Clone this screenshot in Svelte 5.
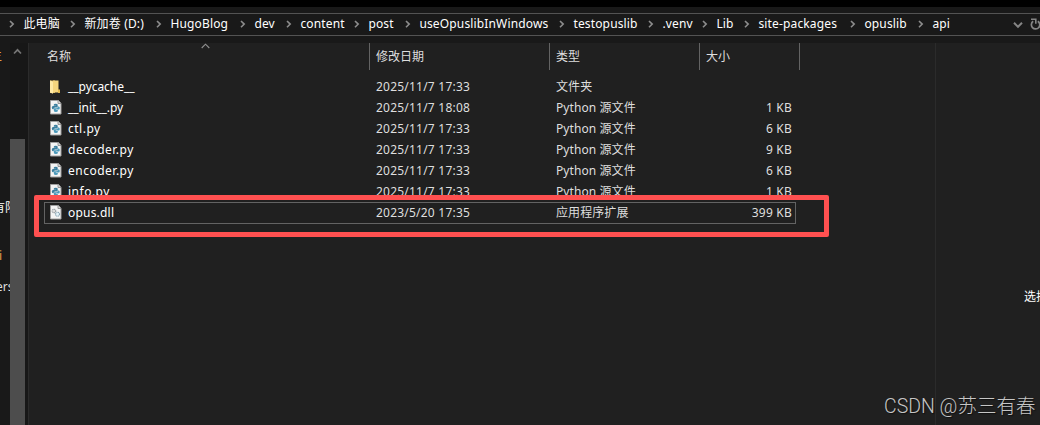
<script>
  const crumbs = [
    { name: '此电脑', width: 37 },
    { name: '新加卷 (D:)', width: 62 },
    { name: 'HugoBlog', width: 60 },
    { name: 'dev', width: 22 },
    { name: 'content', width: 44 },
    { name: 'post', width: 27 },
    { name: 'useOpuslibInWindows', width: 130 },
    { name: 'testopuslib', width: 65 },
    { name: '.venv', width: 30 },
    { name: 'Lib', width: 18 },
    { name: 'site-packages', width: 82 },
    { name: 'opuslib', width: 44 },
    { name: 'api', width: 20 }
  ];

  const files = [
    { name: '__pycache__', date: '2025/11/7 17:33', kind: 'folder', type: '文件夹', size: '' },
    { name: '__init__.py', date: '2025/11/7 18:08', kind: 'python', type: 'Python 源文件', size: '1 KB' },
    { name: 'ctl.py', date: '2025/11/7 17:33', kind: 'python', type: 'Python 源文件', size: '6 KB' },
    { name: 'decoder.py', date: '2025/11/7 17:33', kind: 'python', type: 'Python 源文件', size: '9 KB' },
    { name: 'encoder.py', date: '2025/11/7 17:33', kind: 'python', type: 'Python 源文件', size: '6 KB' },
    { name: 'info.py', date: '2025/11/7 17:33', kind: 'python', type: 'Python 源文件', size: '1 KB' },
    { name: 'opus.dll', date: '2023/5/20 17:35', kind: 'dll', type: '应用程序扩展', size: '399 KB', selected: true }
  ];
</script>

{#snippet arrow()}
  <svg class="arrow" width="25" height="12" viewBox="0 0 25 12">
    <path d="M11 3l3.2 3.1L11 9.2" fill="none" stroke="#8c8c8c" stroke-width="1.6" />
  </svg>
{/snippet}

<div class="window">
  <div class="titlebar"></div>

  <div class="address">
    <div class="crumbs">
      {@render arrow()}
      {#each crumbs as crumb, i}
        {#if i > 0}{@render arrow()}{/if}
        <span class="crumb" style:width="{crumb.width - 1}px">{crumb.name}</span>
      {/each}
    </div>
    <div class="tools">
      <svg width="10" height="8" viewBox="0 0 10 8">
        <path d="M1 1.8l4 4 4-4" fill="none" stroke="#858585" stroke-width="2" />
      </svg>
      <svg class="refresh" width="12" height="13" viewBox="0 0 12 13">
        <path d="M7.8 3.2A4.2 4.2 0 1 1 3.2 3.3" fill="none" stroke="#858585" stroke-width="1.7" />
        <path d="M1 1.2h4.8v4.5" fill="none" stroke="#858585" stroke-width="1.6" />
      </svg>
    </div>
  </div>

  <div class="body">
    <div class="nav">
      <span class="n1">主</span>
      <span class="n2">有限</span>
      <span class="n3">i</span>
      <span class="n4">ers</span>
    </div>
    <div class="scroll">
      <svg width="9" height="7" viewBox="0 0 9 7">
        <path d="M1 5.5l3.5-3.7L8 5.5" fill="none" stroke="#757575" stroke-width="1.7" />
      </svg>
      <div class="thumb"></div>
    </div>

    <div class="list">
      <div class="head">
        <div class="cell">名称
          <svg class="sort" width="9" height="6" viewBox="0 0 9 6">
            <path d="M.7 5l3.8-3.8L8.3 5" fill="none" stroke="#8f8f8f" stroke-width="1.1" />
          </svg>
        </div>
        <div class="cell">修改日期</div>
        <div class="cell">类型</div>
        <div class="cell">大小</div>
      </div>

      <div class="rows">
        {#each files as file}
          <div class="row" class:selected={file.selected}>
            <div class="name" class:dunder={file.name.startsWith('__')}>
              <svg width="14" height="16" viewBox="0 0 14 16">
                {#if file.kind === 'folder'}
                  <path d="M1 1.5h5v12.5H1z" fill="#d9b55c" />
                  <path d="M1 1.5l3 1v12.3L1 13.5z" fill="#ffe9a4" />
                  <path d="M4 1.5h5.5v12H4z" fill="#f5d57d" />
                  <path d="M9 10.5h2v3.5H9z" fill="#e2b94f" />
                {:else}
                  <path d="M1.5.5h8l2.5 3v10.5H1.5z" fill="#f4f4f4" stroke="#a0a0a0" />
                  <path d="M9 .5v3h3" fill="#d5d5d5" stroke="#858585" stroke-width=".8" />
                  {#if file.kind === 'python'}
                    <path d="M4.8 4.7q0-1 1.9-1t2 1v2.7H6q-1.4 0-1.4 1.8h-.7q-1.1 0-1.1-1.6T4 6h2.8v-.3h-2z" fill="#3c7f9f" />
                    <path d="M8.8 10.9q0 1-1.9 1t-2-1V8.2h2.7Q9 8.2 9 6.4h.7q1.1 0 1.1 1.6T9.6 9.6H6.8v.3h2z" fill="#4c9abb" />
                  {:else}
                    <circle cx="5" cy="6" r="1.8" fill="#dedede" stroke="#8f979c" stroke-width="1.1" stroke-dasharray="1 .5" />
                    <circle cx="8.5" cy="9.2" r="2" fill="#e4f2f8" stroke="#87a3b3" stroke-width="1.1" stroke-dasharray="1 .5" />
                  {/if}
                {/if}
              </svg>
              <span>{file.name}</span>
            </div>
            <div>{file.date}</div>
            <div class="type">{file.type}</div>
            <div class="size">{file.size}</div>
          </div>
        {/each}
      </div>
      <div class="highlight"></div>
    </div>

    <div class="preview">
      <span>选择要预览的文件。</span>
    </div>
  </div>

  <div class="watermark">CSDN @苏三有春</div>
</div>

<style>
  :global(body) {
    background: #202020;
    overflow: hidden;
  }

  .window {
    position: relative;
    display: flex;
    flex-direction: column;
    width: 1040px;
    height: 425px;
    overflow: hidden;
    background: #191919;
    color: #dedede;
    font: 12px/21px 'Noto Sans', 'Noto Sans CJK SC', sans-serif;
    white-space: nowrap;
  }

  .titlebar {
    height: 7px;
    background: #000;
  }

  .address {
    display: flex;
    justify-content: space-between;
    box-sizing: border-box;
    height: 23px;
    margin: 6px 0 7px;
    border-top: 1px solid #535353;
    border-bottom: 1px solid #535353;
    color: #fff;
  }

  .crumbs {
    display: flex;
    align-items: center;
    height: 19px;
    margin-left: -1px;
  }

  .arrow {
    flex: none;
    width: 25px;
    margin: 1px 0 0;
  }

  .crumb {
    flex: none;
    letter-spacing: 0.15px;
    text-indent: -0.6px;
  }

  .tools {
    display: flex;
    align-items: center;
  }

  .refresh {
    margin: 0 -2px 0 5px;
    padding-left: 2px;
  }

  .body {
    display: flex;
    flex: 1;
  }

  .nav {
    width: 10px;
    overflow: hidden;
  }

  .nav span {
    display: block;
    width: 30px;
    height: 21px;
  }

  .n1 {
    margin: 2px 0 0 -10px;
    color: #e6a04a;
  }

  .n2 {
    margin: 131px 0 0 -7px;
    color: #fff;
  }

  .n3 {
    margin: 27px 0 0 -1px;
    color: #e6a04a;
  }

  .n4 {
    margin: 10px 0 0 -4px;
  }

  .scroll {
    display: flex;
    flex-direction: column;
    align-items: center;
    width: 15px;
    padding-right: 3px;
    background: #171717;
  }

  .scroll svg {
    margin-top: 5px;
  }

  .thumb {
    flex: 1;
    width: 15px;
    margin-top: 84px;
    background: #4d4d4d;
  }

  .list {
    position: relative;
    width: 906px;
    border-left: 1px solid #2b2b2b;
    background: #202020;
  }

  .head {
    display: grid;
    grid-template-columns: 341px 180px 150px 100px;
    height: 27px;
  }

  .cell {
    position: relative;
    box-sizing: border-box;
    padding: 3px 0 0 6px;
    border-right: 1px solid #636363;
  }

  .cell:first-child {
    padding-left: 18px;
  }

  .sort {
    position: absolute;
    left: 172px;
    top: 0;
  }

  .rows {
    padding: 6px 0 0 15px;
  }

  .row {
    display: grid;
    grid-template-columns: 332px 180px 150px 86px;
    width: 752px;
    height: 21px;
    letter-spacing: 0.22px;
  }

  .name {
    display: flex;
    align-items: center;
    gap: 5px;
    height: 21px;
    padding-left: 5px;
    color: #fff;
    letter-spacing: 0.5px;
  }

  .dunder {
    letter-spacing: -0.05px;
  }

  .type {
    letter-spacing: 0.08px;
  }

  .size {
    text-align: right;
  }

  .selected {
    height: 22px;
    outline: 1px solid #636363;
    outline-offset: -1px;
  }

  .selected .name {
    letter-spacing: 0.2px;
  }

  .highlight {
    position: absolute;
    left: 5px;
    top: 152px;
    box-sizing: border-box;
    width: 795px;
    height: 42px;
    border: 5px solid #ff5050;
    border-radius: 2px;
  }

  .preview {
    flex: 1;
    overflow: hidden;
    border-left: 1px solid #2b2b2b;
    background: #202020;
  }

  .preview span {
    display: block;
    margin: 243px 0 0 88px;
    color: #fff;
  }

  .watermark {
    position: absolute;
    left: 884px;
    top: 393px;
    color: #c6c6c6;
    font: 300 19.5px/28px Roboto, 'Noto Sans CJK SC', sans-serif;
    text-shadow: 1px 1px 1px #0008;
  }
</style>
